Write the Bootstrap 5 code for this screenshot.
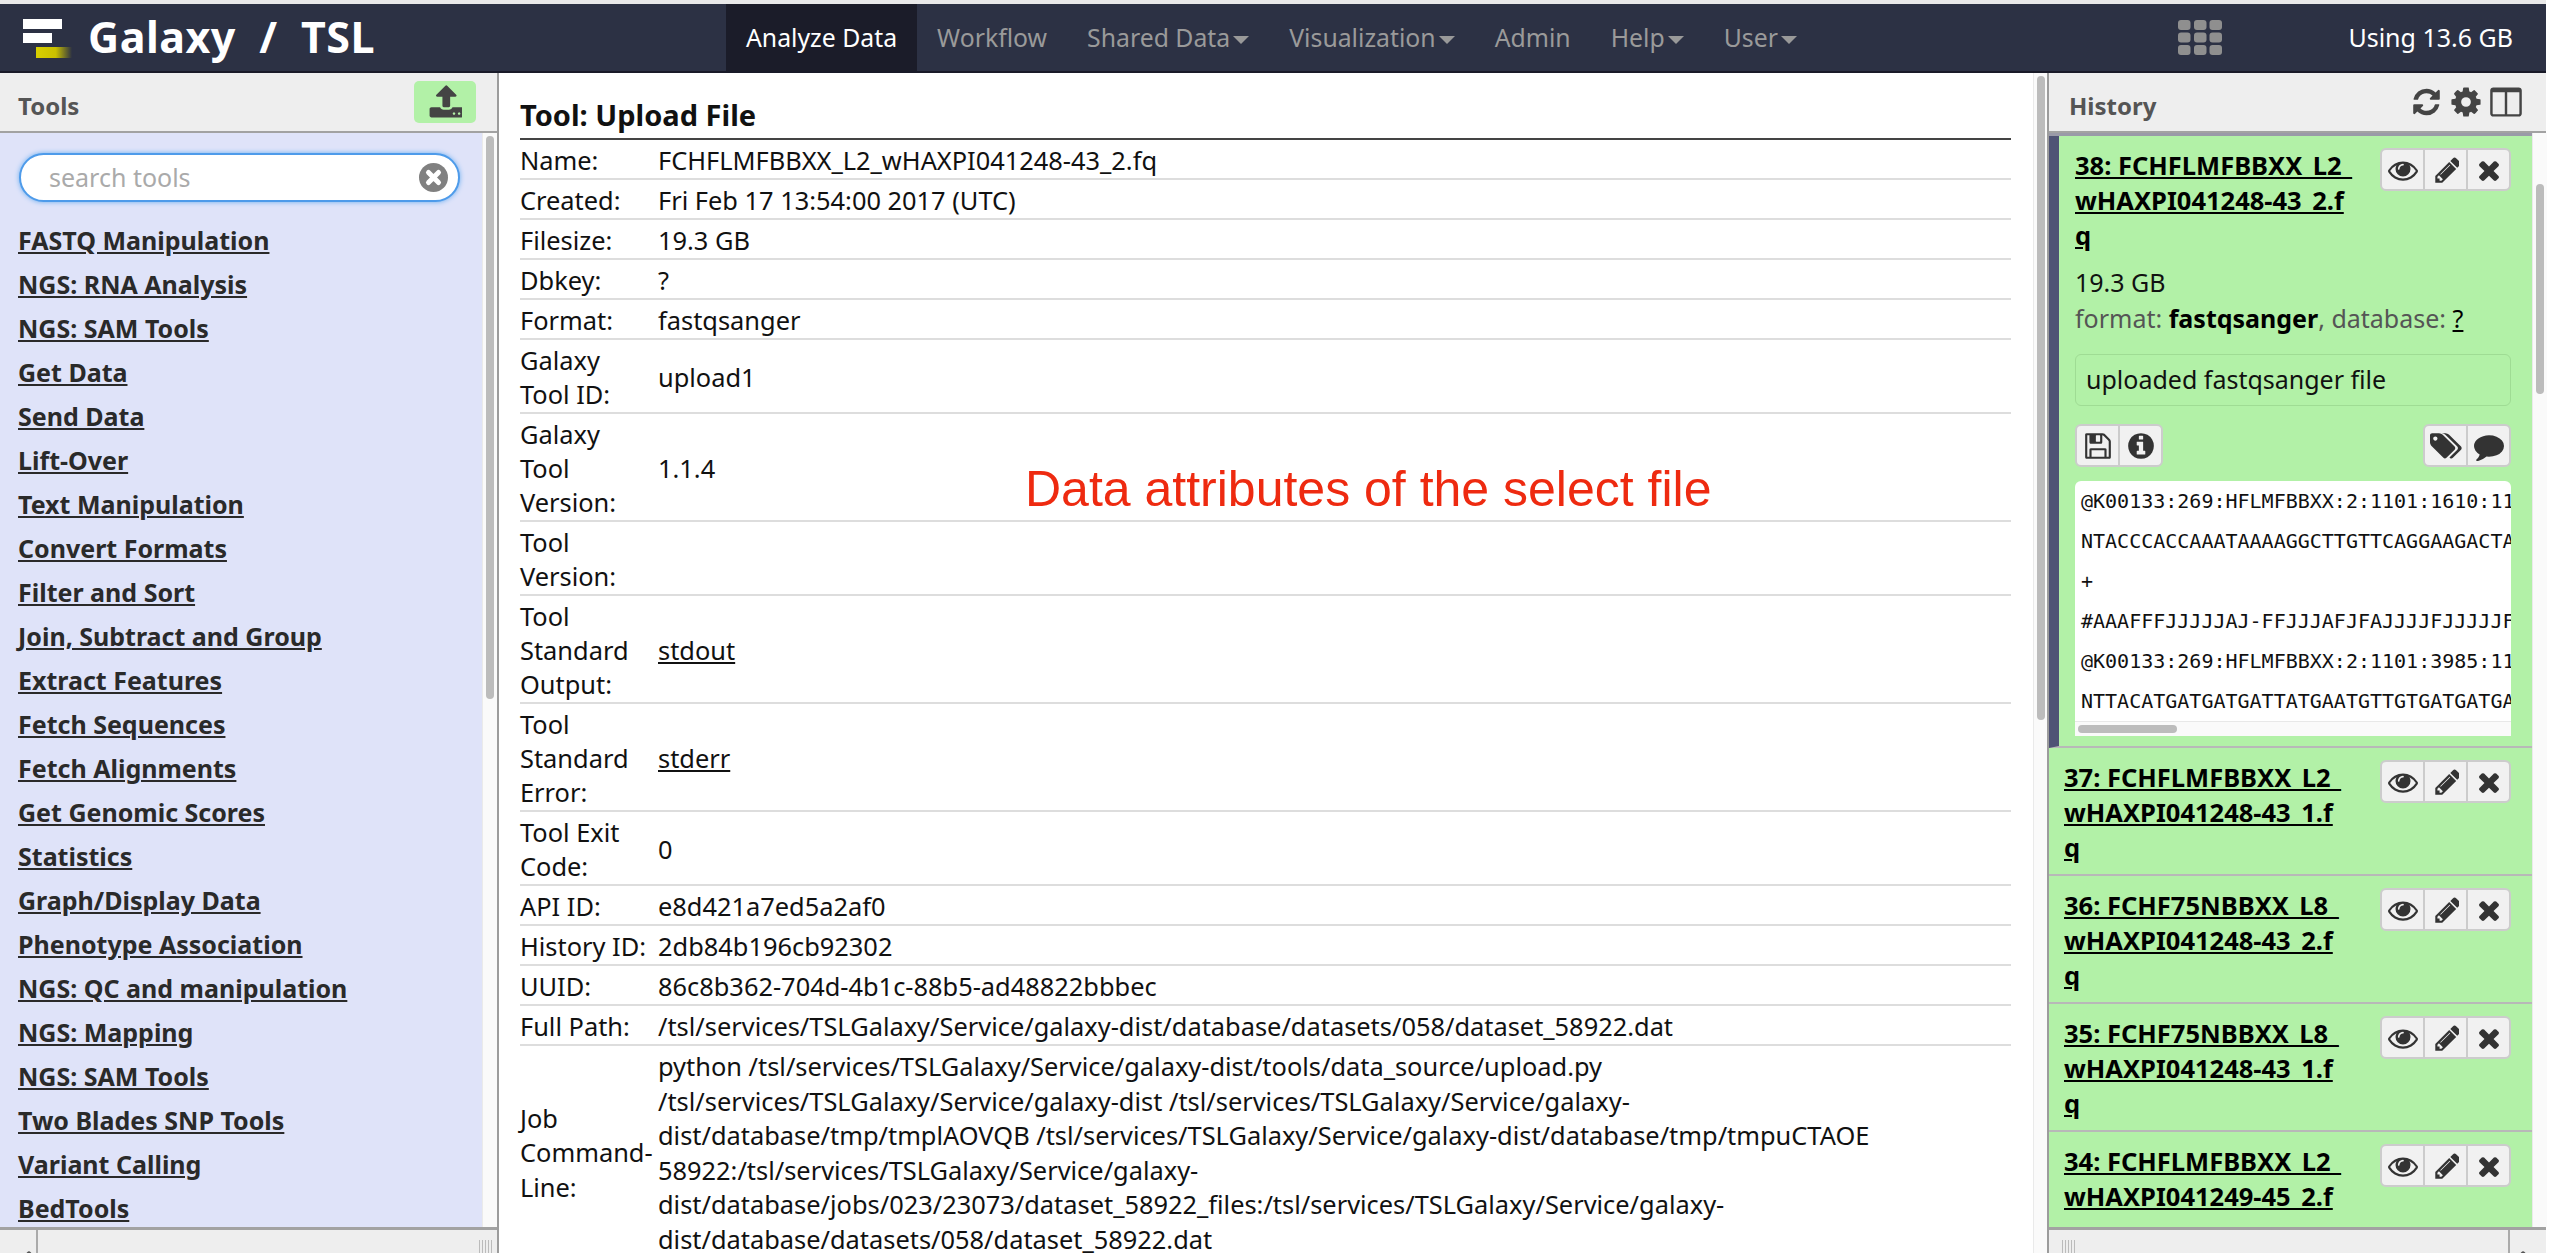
<!DOCTYPE html>
<html lang="en">
<head>
  <meta charset="UTF-8">
  <title>Galaxy / TSL</title>
  <link href="https://cdn.jsdelivr.net/npm/bootstrap@5.3.0/dist/css/bootstrap.min.css" rel="stylesheet">
  <style>
    html, body { height: 100%; }
    body { overflow: hidden; background: #fff; color: #111; font-family: "Noto Sans", "DejaVu Sans", sans-serif; font-size: 25px; }
    .shell { height: 1253px; width: 2546px; display: flex; flex-direction: column; border-top: 4px solid #e9e9e9; position: relative; }

    /* masthead */
    .gx-top { height: 69px; flex: none; background: #2c3144; border-bottom: 2px solid #191a28; padding: 0; align-items: stretch; flex-wrap: nowrap; }
    .gx-brand { width: 726px; flex: none; display: flex; align-items: center; padding-left: 23px; gap: 15px; color: #fff; font-weight: 700; font-size: 43px; letter-spacing: .5px; white-space: pre; }
    .gx-menu { flex-wrap: nowrap; }
    .gx-menu .nav-link { height: 100%; display: flex; align-items: center; padding: 0 20px; color: #9a9a9a; font-size: 24.8px; white-space: nowrap; }
    .gx-menu .nav-link.active { background: #1b1c29; color: #fff; }
    .gx-caret { width: 0; height: 0; border-left: 8px solid transparent; border-right: 8px solid transparent; border-top: 8px solid #999; margin-left: 3px; margin-top: 4px; }
    .gx-grid { margin-left: auto; margin-right: 126px; align-self: center; }
    .gx-quota { color: #fff; font-size: 25px; align-self: center; padding-right: 33px; white-space: nowrap; }

    .gx-body { flex: 1; min-height: 0; display: flex; }

    /* side panels */
    .gx-side { flex: none; display: flex; flex-direction: column; background: #fff; min-height: 0; }
    .gx-left { width: 499px; border-right: 2px solid #9c9c9c; }
    .gx-right { width: 499px; border-left: 2px solid #9c9c9c; }
    .gx-head { height: 60px; flex: none; background: #eee; border-bottom: 2px solid #a2a2a2; display: flex; align-items: center; justify-content: space-between; color: #555; font-weight: 700; font-size: 24px; padding-top: 8px; }
    .gx-left .gx-head { padding-left: 18px; padding-right: 21px; }
    .gx-right .gx-head { padding-left: 20px; padding-right: 24px; }
    .gx-upload { width: 62px; height: 42px; margin-top: -8px; padding: 0; background: #b2f1a7; border: 0; border-radius: 5px; display: flex; align-items: center; justify-content: center; }
    .gx-scrollrow { flex: 1; min-height: 0; display: flex; }
    .gx-toolbox { width: 482px; flex: none; background: #dfe3f9; overflow: hidden; padding: 20px 22px 0 18px; }
    .gx-bar { flex: 1; background: #fafafa; border-left: 1px solid #eaeaea; padding: 3px 3px 0 3px; }
    .gx-thumb { width: 8px; background: #bcbcbc; border-radius: 4px; }
    .gx-search { height: 49px; border: 2px solid #4e9bea; border-radius: 25px; background: #fff; box-shadow: 0 0 5px #6aaef0; display: flex; align-items: center; justify-content: space-between; padding: 0 10px 0 28px; color: #aaa; font-size: 25px; margin-bottom: 16px; margin-left: 1px; }
    .gx-tool { display: block; height: 44px; line-height: 44px; color: #2a2a2a; font-weight: 700; font-size: 25px; white-space: nowrap; text-decoration: underline; }
    .gx-foot { height: 26px; flex: none; background: #eee; border-top: 3px solid #a2a2a2; display: flex; overflow: hidden; }
    .gx-foot-btn { width: 38px; border-right: 2px solid #aaa; padding: 8px 0 0 8px; }
    .gx-foot-btn.gx-foot-end { border-right: 0; border-left: 2px solid #aaa; padding: 8px 0 0 10px; }
    .gx-foot-fill { flex: 1; padding: 10px 0 0 13px; }
    .gx-grip { width: 14px; height: 14px; background: repeating-linear-gradient(90deg, #bbb 0 1px, transparent 1px 3px); }

    /* center */
    .gx-center { flex: 1; min-width: 0; display: flex; overflow: hidden; }
    .gx-main { width: 1534px; flex: none; padding: 24px 22px 0 21px; overflow: hidden; }
    .gx-title { font-size: 29px; font-weight: 700; line-height: 36px; margin: 0; padding-bottom: 5px; border-bottom: 2px solid #444; }
    .gx-attrs { table-layout: fixed; margin: 0; }
    .gx-attrs td { padding: 3px 0 1px 0; line-height: 34px; border-bottom: 2px solid #ddd; vertical-align: middle; color: #111; background: transparent; box-shadow: none; font-size: 25.4px; white-space: nowrap; }
    .gx-attrs td:first-child { width: 138px; }
    .gx-attrs tr:last-child td { line-height: 34.5px; border-bottom: 0; }
    .gx-attrs a { color: #111; }
    .gx-note { position: absolute; left: 1025px; top: 456px; color: #ee2a10; font: 50px "Liberation Sans", sans-serif; white-space: nowrap; }

    /* history */
    .gx-hist-icons { display: flex; gap: 9px; align-items: center; margin-top: -8px; }
    .gx-list { width: 483px; flex: none; overflow: hidden; border-top: 3px solid #9a9aa8; }
    .gx-item { position: relative; background: #b2f1a7; border-bottom: 2px solid #b8b8b8; padding: 12px 21px 0 15px; height: 128px; font-size: 25px; color: #111; }
    .gx-item.gx-open { height: 612px; border-left: 10px solid #4f5375; padding-left: 16px; }
    .gx-name { display: block; font-weight: 700; font-size: 25.5px; line-height: 35px; color: #000; text-decoration: underline; white-space: nowrap; }
    .gx-btns { display: inline-flex; }
    .gx-btns .btn { width: 45px; height: 43px; padding: 0; display: flex; align-items: center; justify-content: center; background: #f1f1f1; border: 2px solid #ccc; border-radius: 0; margin-left: -2px; }
    .gx-btns .btn:first-child { border-radius: 6px 0 0 6px; margin-left: 0; }
    .gx-btns .btn:last-child { border-radius: 0 6px 6px 0; }
    .gx-itembtns { position: absolute; right: 21px; top: 12px; }
    .gx-meta { color: #555; line-height: 36px; white-space: nowrap; }
    .gx-meta b, .gx-meta a { color: #000; }
    .gx-size { line-height: 36px; margin-top: 11px; }
    .gx-annot { border: 1px solid #9fdc94; border-radius: 6px; height: 52px; line-height: 48px; padding-left: 10px; margin: 18px 0 18px; }
    .gx-peek { height: 255px; margin-top: 14px; background: #fff; border-radius: 6px 6px 0 0; overflow: hidden; display: flex; flex-direction: column; }
    .gx-peek-text { flex: 1; padding: 0 0 0 6px; font: 20px/40px "DejaVu Sans Mono", monospace; white-space: pre; overflow: hidden; }
    .gx-peek-bar { height: 15px; flex: none; background: #fafafa; border-top: 1px solid #e8e8e8; padding: 3px; }
    .gx-peek-bar div { width: 99px; height: 8px; background: #bcbcbc; border-radius: 4px; }
  </style>
</head>
<body>
<svg width="0" height="0" class="position-absolute">
  <defs>
    <symbol id="i-eye" viewBox="0 0 1792 1792"><path d="M1664 960q-152-236-381-353 61 104 61 225 0 185-131.500 316.500t-316.500 131.500-316.500-131.500-131.500-316.500q0-121 61-225-229 117-381 353 133 205 333.500 326.500t434.500 121.500 434.500-121.500 333.500-326.500zm-720-384q0-20-14-34t-34-14q-125 0-214.500 89.500t-89.500 214.500q0 20 14 34t34 14 34-14 14-34q0-86 61-147t147-61q20 0 34-14t14-34zm848 384q0 34-20 69-140 230-376.500 368.500t-499.500 138.500-499.500-139-376.500-368q-20-35-20-69t20-69q140-229 376.500-368t499.500-139 499.500 139 376.500 368q20 35 20 69z"/></symbol>
    <symbol id="i-pencil" viewBox="0 0 1536 1792"><path d="M491 1536l91-91-235-235-91 91v107h128v128h107zm523-928q0-22-22-22-10 0-17 7l-542 542q-7 7-7 17 0 22 22 22 10 0 17-7l542-542q7-7 7-17zm-54-192l416 416-832 832h-416v-416zm683 96q0 53-37 90l-166 166-416-416 166-165q36-38 90-38 53 0 91 38l235 234q37 39 37 91z"/></symbol>
    <symbol id="i-times" viewBox="0 0 1408 1792"><path d="M1298 1322q0 40-28 68l-136 136q-28 28-68 28t-68-28l-294-294-294 294q-28 28-68 28t-68-28l-136-136q-28-28-28-68t28-68l294-294-294-294q-28-28-28-68t28-68l136-136q28-28 68-28t68 28l294 294 294-294q28-28 68-28t68 28l136 136q28 28 28 68t-28 68l-294 294 294 294q28 28 28 68z"/></symbol>
    <symbol id="i-save" viewBox="0 0 1536 1792"><path d="M384 1536h768v-384h-768v384zm896 0h128v-896q0-14-10-38.500t-20-34.500l-281-281q-10-10-34-20t-39-10v416q0 40-28 68t-68 28h-576q-40 0-68-28t-28-68v-416h-128v1280h128v-416q0-40 28-68t68-28h832q40 0 68 28t28 68v416zm-384-928v-320q0-13-9.500-22.500t-22.500-9.500h-192q-13 0-22.500 9.500t-9.500 22.500v320q0 13 9.500 22.500t22.500 9.500h192q13 0 22.500-9.500t9.500-22.500zm640 32v928q0 40-28 68t-68 28h-1344q-40 0-68-28t-28-68v-1344q0-40 28-68t68-28h928q40 0 88 20t76 48l280 280q28 28 48 76t20 88z"/></symbol>
    <symbol id="i-info" viewBox="0 0 1536 1792"><path d="M1024 1376v-160q0-14-9-23t-23-9h-96v-512q0-14-9-23t-23-9h-320q-14 0-23 9t-9 23v160q0 14 9 23t23 9h96v320h-96q-14 0-23 9t-9 23v160q0 14 9 23t23 9h448q14 0 23-9t9-23zm-128-896v-160q0-14-9-23t-23-9h-192q-14 0-23 9t-9 23v160q0 14 9 23t23 9h192q14 0 23-9t9-23zm640 416q0 209-103 385.500t-279.500 279.500-385.500 103-385.500-103-279.500-279.500-103-385.500 103-385.500 279.500-279.500 385.500-103 385.500 103 279.500 279.500 103 385.500z"/></symbol>
    <symbol id="i-tags" viewBox="0 0 1920 1792"><path d="M448 448q0-53-37.500-90.500t-90.500-37.500-90.500 37.500-37.500 90.500 37.500 90.500 90.500 37.500 90.500-37.500 37.500-90.500zm1067 576q0 53-37 90l-491 492q-39 37-91 37-53 0-90-37l-715-716q-38-37-64.500-101t-26.500-117v-416q0-52 38-90t90-38h416q53 0 117 26.500t102 64.500l715 714q37 39 37 91zm384 0q0 53-37 90l-491 492q-39 37-91 37-36 0-59-14t-53-45l470-470q37-37 37-90 0-52-37-91l-715-714q-38-38-102-64.500t-117-26.500h224q53 0 117 26.500t102 64.500l715 714q37 39 37 91z"/></symbol>
    <symbol id="i-comment" viewBox="0 0 1792 1792"><path d="M1792 896q0 174-120 321.500t-326 233-450 85.500q-70 0-145-8-198 175-460 242-49 14-114 22-17 2-30.500-9t-17.500-29v-1q-3-4-.5-12t2-10 4.500-9.500l6-9 7-8.500 8-9q7-8 31-34.500t34.500-38 31-39.500 32.500-51 27-59 26-76q-157-89-247.500-220t-90.500-281q0-130 71-248.500t191-204.500 286-136.500 348-50.500q244 0 450 85.500t326 233 120 321.500z"/></symbol>
    <symbol id="i-refresh" viewBox="0 0 1792 1792"><path d="M1639 1056q0 5-1 7-64 268-268 434.500t-478 166.500q-146 0-282.500-55t-243.500-157l-129 129q-19 19-45 19t-45-19-19-45v-448q0-26 19-45t45-19h448q26 0 45 19t19 45-19 45l-137 137q71 66 161 102t187 36q134 0 250-65t186-179q11-17 53-117 8-23 30-23h192q13 0 22.500 9.500t9.500 22.500zm25-800v448q0 26-19 45t-45 19h-448q-26 0-45-19t-19-45 19-45l138-138q-148-137-349-137-134 0-250 65t-186 179q-11 17-53 117-8 23-30 23h-199q-13 0-22.500-9.500t-9.500-22.500v-7q65-268 270-434.500t480-166.500q146 0 284 55.500t245 156.500l130-129q19-19 45-19t45 19 19 45z"/></symbol>
    <symbol id="i-cog" viewBox="0 0 1536 1792"><path d="M1024 896q0-106-75-181t-181-75-181 75-75 181 75 181 181 75 181-75 75-181zm512-109v222q0 12-8 23t-20 13l-185 28q-19 54-39 91 35 50 107 138 10 12 10 25t-9 23q-27 37-99 108t-94 71q-12 0-26-9l-138-108q-44 23-91 38-16 136-29 186-7 28-36 28h-222q-14 0-24.500-8.500t-11.500-21.500l-28-184q-49-16-90-37l-141 107q-10 9-25 9-14 0-25-11-126-114-165-168-7-10-7-23 0-12 8-23 15-21 51-66.500t54-70.500q-27-50-41-99l-183-27q-13-2-21-12.500t-8-23.500v-222q0-12 8-23t19-13l186-28q14-46 39-92-40-57-107-138-10-12-10-24 0-10 9-23 26-36 98.500-107.500t94.500-71.500q13 0 26 10l138 107q44-23 91-38 16-136 29-186 7-28 36-28h222q14 0 24.500 8.500t11.500 21.500l28 184q49 16 90 37l142-107q9-9 24-9 13 0 25 10 129 119 165 170 7 8 7 22 0 12-8 23-15 21-51 66.500t-54 70.500q26 50 41 98l183 28q13 2 21 12.500t8 23.500z"/></symbol>
    <symbol id="i-columns" viewBox="0 0 1664 1792"><path d="M160 1536h608v-1152h-640v1120q0 13 9.500 22.500t22.500 9.500zm1376-32v-1120h-640v1152h608q13 0 22.500-9.500t9.500-22.500zm128-1216v1216q0 66-47 113t-113 47h-1344q-66 0-113-47t-47-113v-1216q0-66 47-113t113-47h1344q66 0 113 47t47 113z"/></symbol>
    <symbol id="i-upload" viewBox="0 0 1664 1792"><path d="M1344 1472q0-26-19-45t-45-19-45 19-19 45 19 45 45 19 45-19 19-45zm256 0q0-26-19-45t-45-19-45 19-19 45 19 45 45 19 45-19 19-45zm128-224v320q0 40-28 68t-68 28h-1472q-40 0-68-28t-28-68v-320q0-40 28-68t68-28h427q21 56 70.500 92t110.500 36h256q61 0 110.500-36t70.500-92h427q40 0 68 28t28 68zm-325-648q-17 40-59 40h-256v448q0 26-19 45t-45 19h-256q-26 0-45-19t-19-45v-448h-256q-42 0-59-40-17-39 14-69l448-448q18-19 45-19t45 19l448 448q31 30 14 69z"/></symbol>
    <linearGradient id="fade"><stop offset="0" stop-color="#d8cf00"/><stop offset=".55" stop-color="#c9c000"/><stop offset="1" stop-color="#2c3144"/></linearGradient>
  </defs>
</svg>

<div class="shell">
  <nav class="navbar gx-top d-flex">
    <a class="gx-brand text-decoration-none" href="#">
      <svg width="50" height="40" viewBox="0 0 50 40"><rect x="0" y="1" width="39" height="10" fill="#fff"/><rect x="0" y="15" width="29" height="10" fill="#fff"/><rect x="13" y="29" width="36" height="11" fill="url(#fade)"/></svg>
      <span>Galaxy  /  TSL</span>
    </a>
    <ul class="nav gx-menu">
      <li class="nav-item"><a class="nav-link active" href="#">Analyze Data</a></li>
      <li class="nav-item"><a class="nav-link" href="#">Workflow</a></li>
      <li class="nav-item"><a class="nav-link" href="#">Shared Data<span class="gx-caret"></span></a></li>
      <li class="nav-item"><a class="nav-link" href="#">Visualization<span class="gx-caret"></span></a></li>
      <li class="nav-item"><a class="nav-link" href="#">Admin</a></li>
      <li class="nav-item"><a class="nav-link" href="#">Help<span class="gx-caret"></span></a></li>
      <li class="nav-item"><a class="nav-link" href="#">User<span class="gx-caret"></span></a></li>
    </ul>
    <svg class="gx-grid" width="44" height="35" viewBox="0 0 44 35" fill="#8f8f8f">
      <rect x="0" y="0" width="12.500" height="10" rx="3"/><rect x="16" y="0" width="12.500" height="10" rx="3"/><rect x="31.500" y="0" width="12.500" height="10" rx="3"/>
      <rect x="0" y="12.500" width="12.500" height="10" rx="3"/><rect x="16" y="12.500" width="12.500" height="10" rx="3"/><rect x="31.500" y="12.500" width="12.500" height="10" rx="3"/>
      <rect x="0" y="25" width="12.500" height="10" rx="3"/><rect x="16" y="25" width="12.500" height="10" rx="3"/><rect x="31.500" y="25" width="12.500" height="10" rx="3"/>
    </svg>
    <div class="gx-quota">Using 13.6 GB</div>
  </nav>

  <div class="gx-body">
    <aside class="gx-side gx-left">
      <div class="gx-head">
        <span>Tools</span>
        <button class="gx-upload" type="button"><svg width="34" height="36" fill="#444"><use href="#i-upload"/></svg></button>
      </div>
      <div class="gx-scrollrow">
        <div class="gx-toolbox">
          <div class="gx-search">
            <span>search tools</span>
            <svg width="29" height="29" viewBox="0 0 29 29"><circle cx="14.500" cy="14.500" r="14.500" fill="#808080"/><path d="M9.500 9.500l10 10M19.500 9.500l-10 10" stroke="#fff" stroke-width="5" stroke-linecap="round"/></svg>
          </div>
          <a class="gx-tool" href="#">FASTQ Manipulation</a>
          <a class="gx-tool" href="#">NGS: RNA Analysis</a>
          <a class="gx-tool" href="#">NGS: SAM Tools</a>
          <a class="gx-tool" href="#">Get Data</a>
          <a class="gx-tool" href="#">Send Data</a>
          <a class="gx-tool" href="#">Lift-Over</a>
          <a class="gx-tool" href="#">Text Manipulation</a>
          <a class="gx-tool" href="#">Convert Formats</a>
          <a class="gx-tool" href="#">Filter and Sort</a>
          <a class="gx-tool" href="#">Join, Subtract and Group</a>
          <a class="gx-tool" href="#">Extract Features</a>
          <a class="gx-tool" href="#">Fetch Sequences</a>
          <a class="gx-tool" href="#">Fetch Alignments</a>
          <a class="gx-tool" href="#">Get Genomic Scores</a>
          <a class="gx-tool" href="#">Statistics</a>
          <a class="gx-tool" href="#">Graph/Display Data</a>
          <a class="gx-tool" href="#">Phenotype Association</a>
          <a class="gx-tool" href="#">NGS: QC and manipulation</a>
          <a class="gx-tool" href="#">NGS: Mapping</a>
          <a class="gx-tool" href="#">NGS: SAM Tools</a>
          <a class="gx-tool" href="#">Two Blades SNP Tools</a>
          <a class="gx-tool" href="#">Variant Calling</a>
          <a class="gx-tool" href="#">BedTools</a>
        </div>
        <div class="gx-bar"><div class="gx-thumb" style="height: 563px"></div></div>
      </div>
      <div class="gx-foot">
        <div class="gx-foot-btn"><svg width="24" height="18"><path d="M8 18L21 4" stroke="#555" stroke-width="5" stroke-linecap="round"/></svg></div>
        <div class="gx-foot-fill d-flex justify-content-end pe-1"><div class="gx-grip"></div></div>
      </div>
    </aside>

    <main class="gx-center">
      <div class="gx-main">
        <h1 class="gx-title">Tool: Upload File</h1>
        <table class="table gx-attrs">
          <tbody>
            <tr><td>Name:</td><td>FCHFLMFBBXX_L2_wHAXPI041248-43_2.fq</td></tr>
            <tr><td>Created:</td><td>Fri Feb 17 13:54:00 2017 (UTC)</td></tr>
            <tr><td>Filesize:</td><td>19.3 GB</td></tr>
            <tr><td>Dbkey:</td><td>?</td></tr>
            <tr><td>Format:</td><td>fastqsanger</td></tr>
            <tr><td>Galaxy<br>Tool ID:</td><td>upload1</td></tr>
            <tr><td>Galaxy<br>Tool<br>Version:</td><td>1.1.4</td></tr>
            <tr><td>Tool<br>Version:</td><td></td></tr>
            <tr><td>Tool<br>Standard<br>Output:</td><td><a href="#">stdout</a></td></tr>
            <tr><td>Tool<br>Standard<br>Error:</td><td><a href="#">stderr</a></td></tr>
            <tr><td>Tool Exit<br>Code:</td><td>0</td></tr>
            <tr><td>API ID:</td><td>e8d421a7ed5a2af0</td></tr>
            <tr><td>History ID:</td><td>2db84b196cb92302</td></tr>
            <tr><td>UUID:</td><td>86c8b362-704d-4b1c-88b5-ad48822bbbec</td></tr>
            <tr><td>Full Path:</td><td>/tsl/services/TSLGalaxy/Service/galaxy-dist/database/datasets/058/dataset_58922.dat</td></tr>
            <tr><td>Job<br>Command-<br>Line:</td><td>python /tsl/services/TSLGalaxy/Service/galaxy-dist/tools/data_source/upload.py<br>/tsl/services/TSLGalaxy/Service/galaxy-dist /tsl/services/TSLGalaxy/Service/galaxy-<br>dist/database/tmp/tmplAOVQB /tsl/services/TSLGalaxy/Service/galaxy-dist/database/tmp/tmpuCTAOE<br>58922:/tsl/services/TSLGalaxy/Service/galaxy-<br>dist/database/jobs/023/23073/dataset_58922_files:/tsl/services/TSLGalaxy/Service/galaxy-<br>dist/database/datasets/058/dataset_58922.dat</td></tr>
          </tbody>
        </table>
      </div>
      <div class="gx-bar"><div class="gx-thumb" style="height: 644px"></div></div>
    </main>

    <aside class="gx-side gx-right">
      <div class="gx-head">
        <span>History</span>
        <div class="gx-hist-icons">
          <svg width="31" height="34" fill="#444"><use href="#i-refresh"/></svg>
          <svg width="30" height="34" fill="#444"><use href="#i-cog"/></svg>
          <svg width="32" height="34" fill="#444"><use href="#i-columns"/></svg>
        </div>
      </div>
      <div class="gx-scrollrow">
        <div class="gx-list">
          <div class="gx-item gx-open">
            <a class="gx-name" href="#">38: FCHFLMFBBXX_L2_<br>wHAXPI041248-43_2.f<br>q</a>
            <div class="gx-btns gx-itembtns">
              <button class="btn" type="button"><svg width="30" height="30" fill="#333"><use href="#i-eye"/></svg></button>
              <button class="btn" type="button"><svg width="26" height="30" fill="#333"><use href="#i-pencil"/></svg></button>
              <button class="btn" type="button"><svg width="24" height="30" fill="#333"><use href="#i-times"/></svg></button>
            </div>
            <div class="gx-size">19.3 GB</div>
            <div class="gx-meta">format: <b>fastqsanger</b>, database: <a href="#">?</a></div>
            <div class="gx-annot">uploaded fastqsanger file</div>
            <div class="d-flex justify-content-between">
              <div class="gx-btns">
                <button class="btn" type="button"><svg width="26" height="30" fill="#333"><use href="#i-save"/></svg></button>
                <button class="btn" type="button"><svg width="26" height="30" fill="#333"><use href="#i-info"/></svg></button>
              </div>
              <div class="gx-btns">
                <button class="btn" type="button"><svg width="32" height="30" fill="#333"><use href="#i-tags"/></svg></button>
                <button class="btn" type="button"><svg width="30" height="30" fill="#333"><use href="#i-comment"/></svg></button>
              </div>
            </div>
            <div class="gx-peek">
              <div class="gx-peek-text">@K00133:269:HFLMFBBXX:2:1101:1610:11
NTACCCACCAAATAAAAGGCTTGTTCAGGAAGACTA
+
#AAAFFFJJJJJAJ-FFJJJAFJFAJJJJFJJJJJF
@K00133:269:HFLMFBBXX:2:1101:3985:11
NTTACATGATGATGATTATGAATGTTGTGATGATGA</div>
              <div class="gx-peek-bar"><div></div></div>
            </div>
          </div>
          <div class="gx-item">
            <a class="gx-name" href="#">37: FCHFLMFBBXX_L2_<br>wHAXPI041248-43_1.f<br>q</a>
            <div class="gx-btns gx-itembtns">
              <button class="btn" type="button"><svg width="30" height="30" fill="#333"><use href="#i-eye"/></svg></button>
              <button class="btn" type="button"><svg width="26" height="30" fill="#333"><use href="#i-pencil"/></svg></button>
              <button class="btn" type="button"><svg width="24" height="30" fill="#333"><use href="#i-times"/></svg></button>
            </div>
          </div>
          <div class="gx-item">
            <a class="gx-name" href="#">36: FCHF75NBBXX_L8_<br>wHAXPI041248-43_2.f<br>q</a>
            <div class="gx-btns gx-itembtns">
              <button class="btn" type="button"><svg width="30" height="30" fill="#333"><use href="#i-eye"/></svg></button>
              <button class="btn" type="button"><svg width="26" height="30" fill="#333"><use href="#i-pencil"/></svg></button>
              <button class="btn" type="button"><svg width="24" height="30" fill="#333"><use href="#i-times"/></svg></button>
            </div>
          </div>
          <div class="gx-item">
            <a class="gx-name" href="#">35: FCHF75NBBXX_L8_<br>wHAXPI041248-43_1.f<br>q</a>
            <div class="gx-btns gx-itembtns">
              <button class="btn" type="button"><svg width="30" height="30" fill="#333"><use href="#i-eye"/></svg></button>
              <button class="btn" type="button"><svg width="26" height="30" fill="#333"><use href="#i-pencil"/></svg></button>
              <button class="btn" type="button"><svg width="24" height="30" fill="#333"><use href="#i-times"/></svg></button>
            </div>
          </div>
          <div class="gx-item">
            <a class="gx-name" href="#">34: FCHFLMFBBXX_L2_<br>wHAXPI041249-45_2.f</a>
            <div class="gx-btns gx-itembtns">
              <button class="btn" type="button"><svg width="30" height="30" fill="#333"><use href="#i-eye"/></svg></button>
              <button class="btn" type="button"><svg width="26" height="30" fill="#333"><use href="#i-pencil"/></svg></button>
              <button class="btn" type="button"><svg width="24" height="30" fill="#333"><use href="#i-times"/></svg></button>
            </div>
          </div>
        </div>
        <div class="gx-bar"><div class="gx-thumb mt-5" style="height: 210px"></div></div>
      </div>
      <div class="gx-foot">
        <div class="gx-foot-fill"><div class="gx-grip"></div></div>
        <div class="gx-foot-btn gx-foot-end"><svg width="24" height="18"><path d="M3 4L16 18" stroke="#555" stroke-width="5" stroke-linecap="round"/></svg></div>
      </div>
    </aside>
    <div class="gx-note">Data attributes of the select file</div>
  </div>
</div>
<script src="https://cdn.jsdelivr.net/npm/bootstrap@5.3.0/dist/js/bootstrap.bundle.min.js"></script>
</body>
</html>
